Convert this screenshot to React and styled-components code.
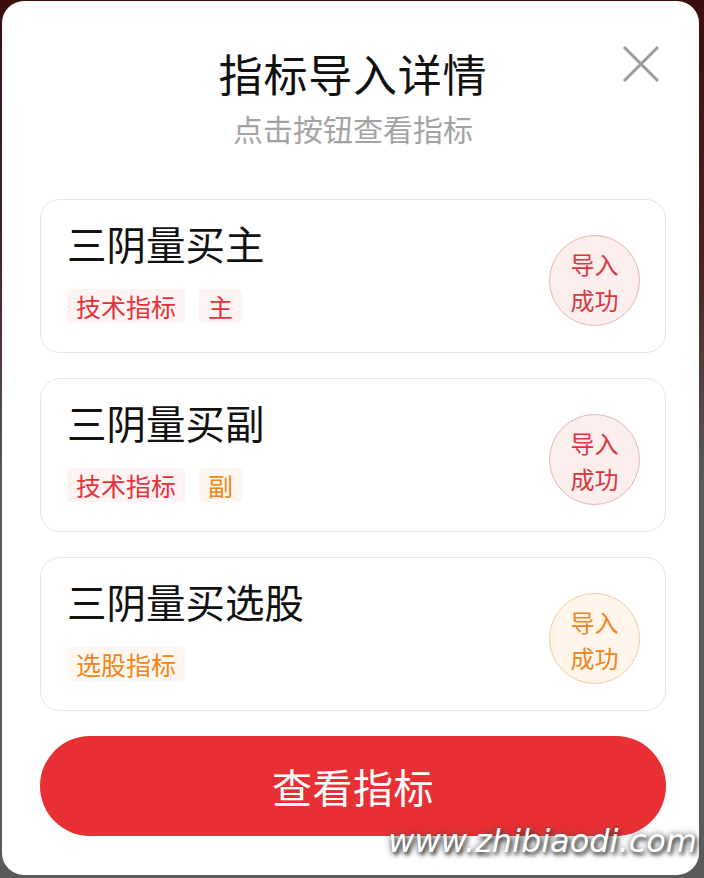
import styled, { createGlobalStyle } from 'styled-components'

const GlobalStyle = createGlobalStyle`
  html, body {
    margin: 0;
    padding: 0;
  }
  body {
    width: 704px;
    height: 878px;
    overflow: hidden;
    background: linear-gradient(#3b0d0d 0%, #4a2222 30%, #5a5a5a 55%, #5a5a5a 100%);
    font-family: "Noto Sans CJK SC", "Noto Sans", sans-serif;
  }
`

const tones = {
  red: { text: '#e5323a', tag: '#fdf3f3', ring: '#e9b4b6', fill: '#fdeeee', badgeText: '#d8363e' },
  orange: { text: '#f0861a', tag: '#fef7ef', ring: '#f1cc9f', fill: '#fff5ea', badgeText: '#ef8420' },
}

const items = [
  { name: '三阴量买主', tags: [{ label: '技术指标', tone: 'red' }, { label: '主', tone: 'red' }], tone: 'red' },
  { name: '三阴量买副', tags: [{ label: '技术指标', tone: 'red' }, { label: '副', tone: 'orange' }], tone: 'red' },
  { name: '三阴量买选股', tags: [{ label: '选股指标', tone: 'orange' }], tone: 'orange' },
]

const App = () => {
  return (
    <>
      <GlobalStyle />
      <Modal>
        <Header>
          <Title>指标导入详情</Title>
          <SubTitle>点击按钮查看指标</SubTitle>
          <CloseButton aria-label='关闭'>
            <svg width='38' height='38' viewBox='0 0 38 38'>
              <path d='M2 2 L36 36 M36 2 L2 36' stroke='#9a9a9a' strokeWidth='3' fill='none' />
            </svg>
          </CloseButton>
        </Header>
        <List>
          {items.map(item => (
            <Card key={item.name}>
              <Info>
                <Name>{item.name}</Name>
                <Tags>
                  {item.tags.map(tag => (
                    <Tag key={tag.label} $tone={tag.tone}>{tag.label}</Tag>
                  ))}
                </Tags>
              </Info>
              <Badge $tone={item.tone}>
                <span>导入</span>
                <span>成功</span>
              </Badge>
            </Card>
          ))}
          <ViewButton>查看指标</ViewButton>
        </List>
        <Watermark>www.zhibiaodi.com</Watermark>
      </Modal>
    </>
  )
}

export default App

const Modal = styled.div`
  position: relative;
  box-sizing: border-box;
  width: 697px;
  height: 874px;
  margin: 1px 5px 3px 2px;
  padding: 0 33px 38px 38px;
  background: #fff;
  border-radius: 22px;
  display: flex;
  flex-direction: column;
`

const Header = styled.div`
  position: relative;
  display: flex;
  flex-direction: column;
  align-items: center;
  padding-top: 46px;
  margin-bottom: 53px;
`

const Title = styled.div`
  font-size: 44px;
  line-height: 52px;
  color: #111;
  letter-spacing: 0.8px;
`

const SubTitle = styled.div`
  margin-top: 11px;
  font-size: 30px;
  line-height: 36px;
  color: #a3a3a3;
`

const CloseButton = styled.button`
  position: absolute;
  top: 44px;
  right: 6px;
  width: 38px;
  height: 38px;
  padding: 0;
  border: none;
  background: none;
  display: flex;
`

const List = styled.div`
  display: flex;
  flex-direction: column;
  gap: 25px;
`

const Card = styled.div`
  box-sizing: border-box;
  height: 154px;
  border: 1px solid #e6e6e6;
  border-radius: 20px;
  padding: 21px 25px 0 26px;
  display: flex;
  align-items: flex-start;
  justify-content: space-between;
`

const Info = styled.div`
  display: flex;
  flex-direction: column;
  gap: 24px;
`

const Name = styled.div`
  font-size: 39.5px;
  line-height: 44px;
  color: #111;
`

const Tags = styled.div`
  display: flex;
  gap: 14px;
`

const Tag = styled.div`
  height: 34px;
  padding: 0 9px;
  display: flex;
  align-items: center;
  font-size: 25px;
  border-radius: 4px;
  color: ${p => tones[p.$tone].text};
  background: ${p => tones[p.$tone].tag};
`

const Badge = styled.div`
  box-sizing: border-box;
  width: 91px;
  height: 91px;
  border-radius: 50%;
  border: 1px solid ${p => tones[p.$tone].ring};
  background: ${p => tones[p.$tone].fill};
  color: ${p => tones[p.$tone].badgeText};
  display: flex;
  flex-direction: column;
  align-items: center;
  justify-content: center;
  font-size: 24px;
  line-height: 36px;
  padding-top: 2px;
  margin-top: 14px;
`

const ViewButton = styled.button`
  height: 100px;
  border: none;
  border-radius: 50px;
  background: #e83034;
  color: #fff;
  font-family: "Noto Sans CJK SC", "Noto Sans", sans-serif;
  font-size: 40px;
  letter-spacing: 0.5px;
`

const Watermark = styled.div`
  position: absolute;
  right: 2px;
  bottom: 15px;
  font-family: "DejaVu Sans", sans-serif;
  font-style: italic;
  font-size: 32px;
  color: #fff;
  text-shadow: 2px 3px 4px #333, 0 0 6px #555;
`
